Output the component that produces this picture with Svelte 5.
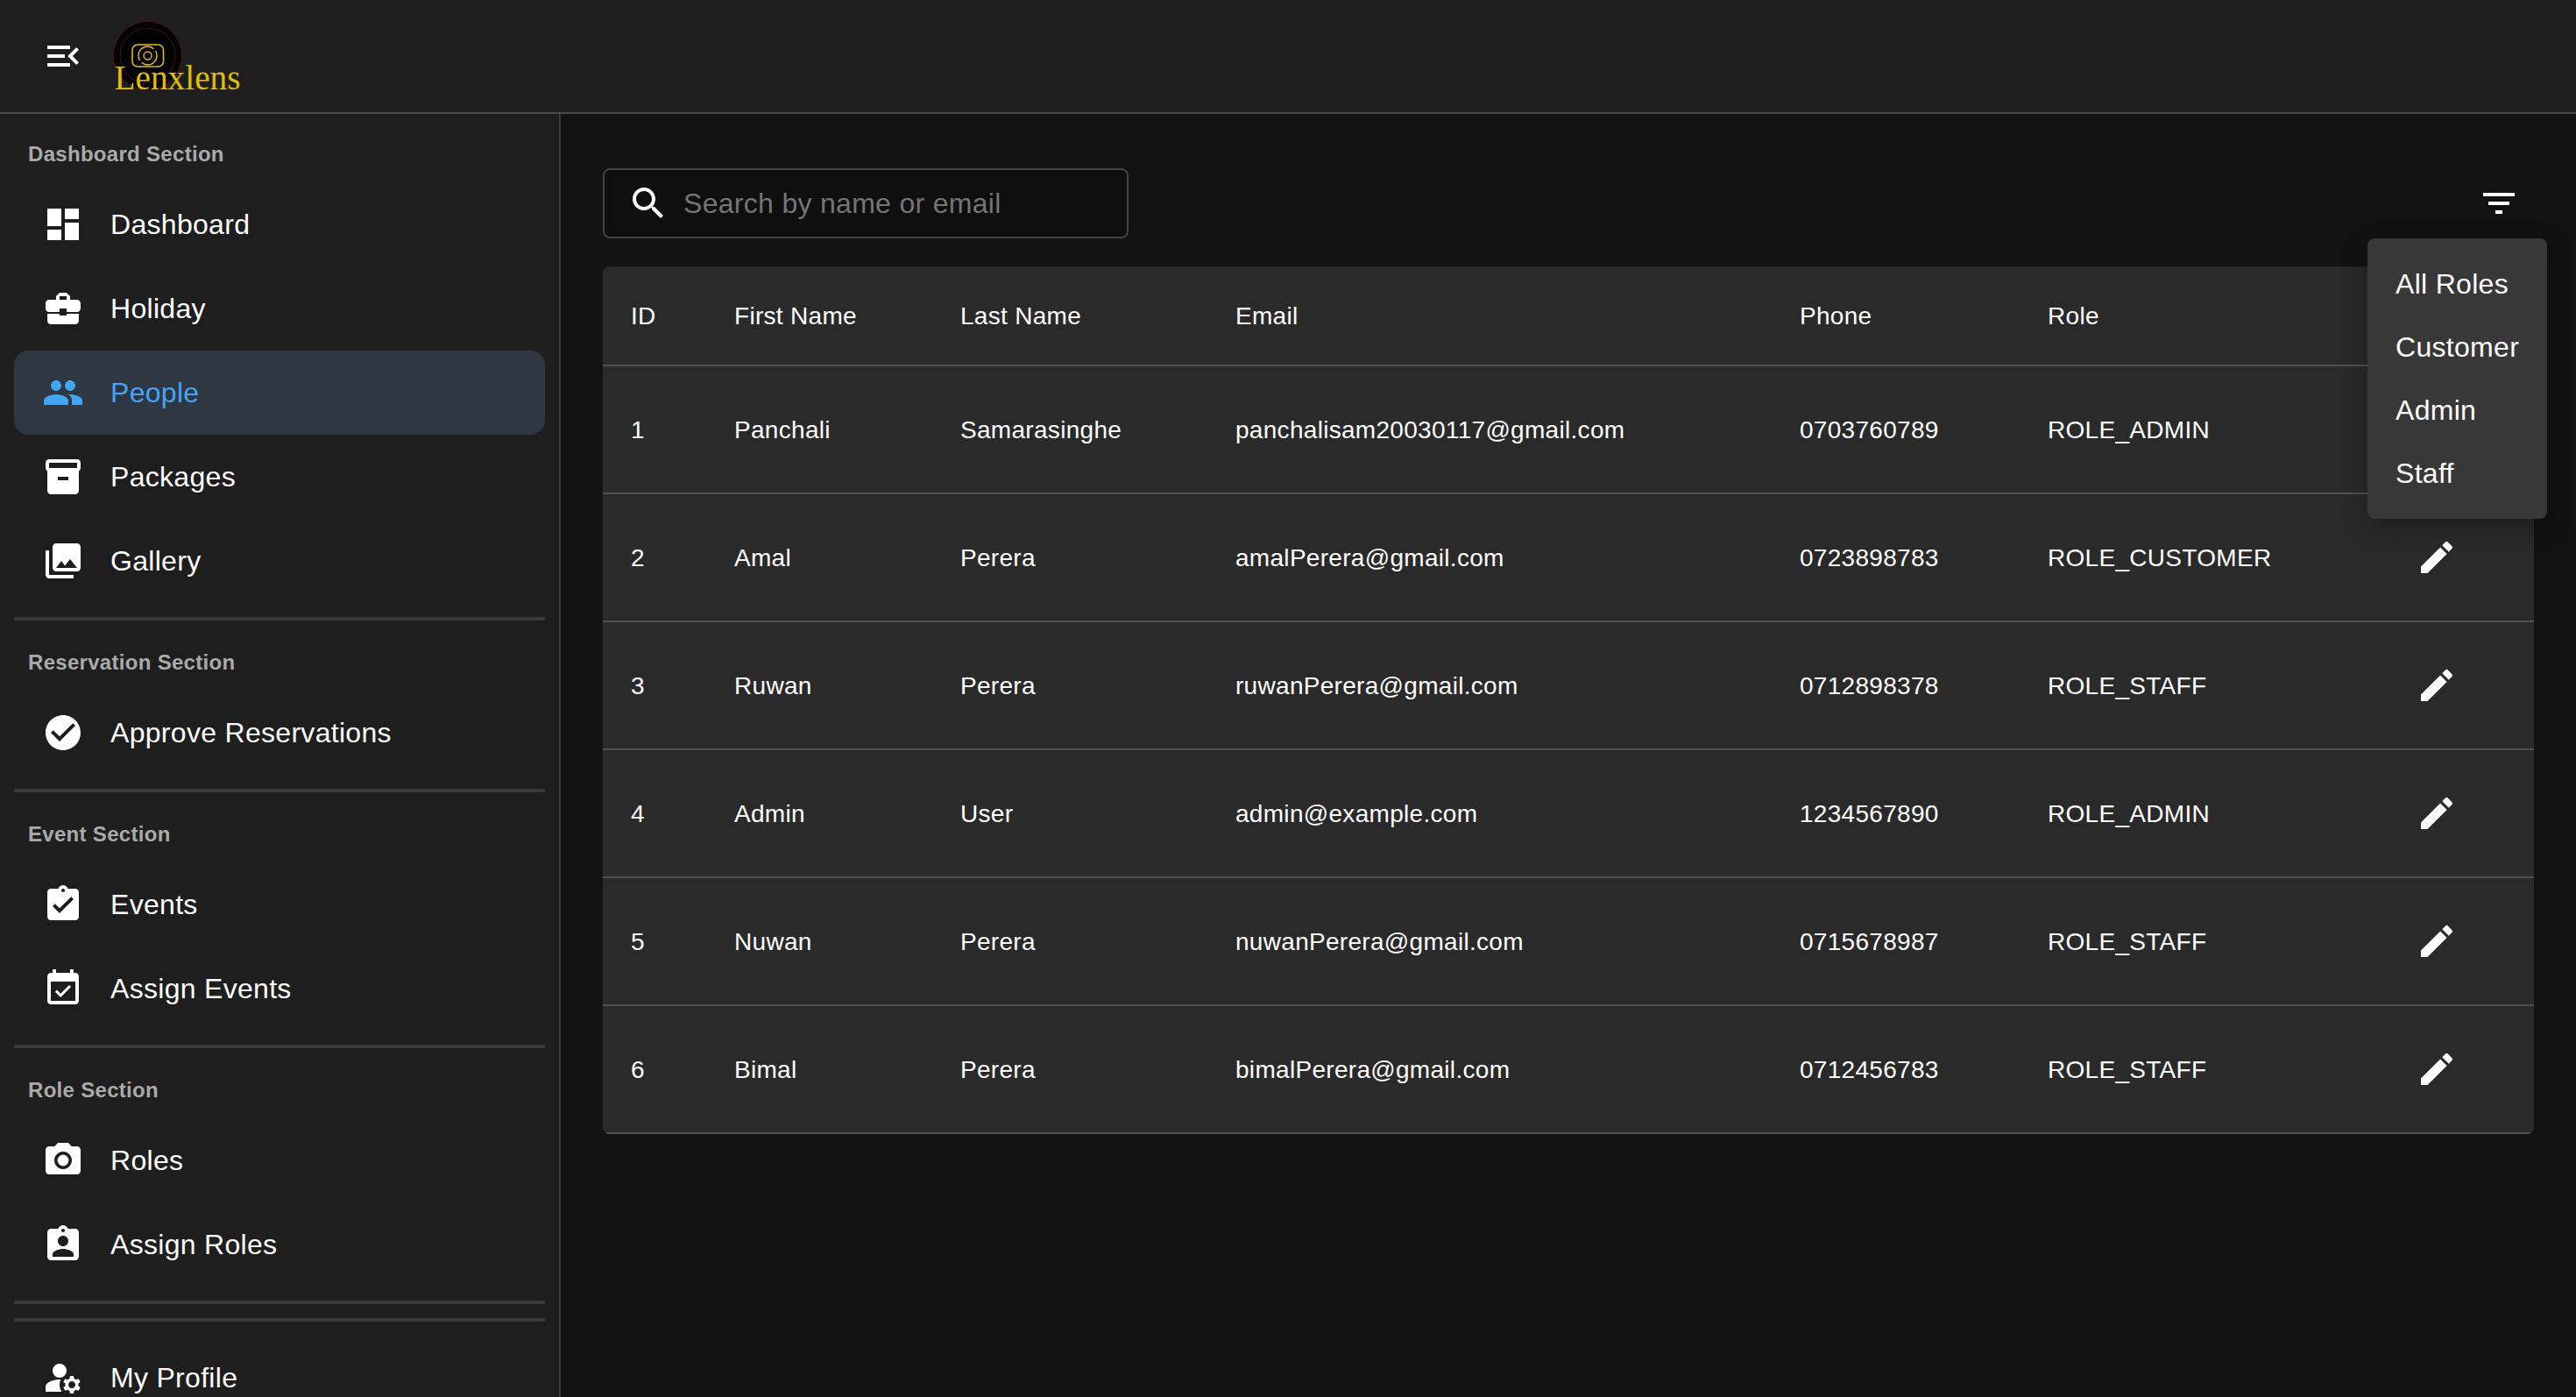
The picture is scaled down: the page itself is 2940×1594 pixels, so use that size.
<script lang="ts">
  const ICONS: Record<string, string> = {
    menuOpen: 'M3 18h13v-2H3v2zm0-5h10v-2H3v2zm0-7v2h13V6H3zm18 9.59L17.42 12 21 8.41 19.59 7l-5 5 5 5L21 15.59z',
    dashboard: 'M3 13h8V3H3v10zm0 8h8v-6H3v6zm10 0h8V11h-8v10zm0-18v6h8V3h-8z',
    holiday: 'M10 16v-1H3.01L3 19c0 1.11.89 2 2 2h14c1.11 0 2-.89 2-2v-4h-7v1h-4zm10-9h-4.01V5l-2-2h-4l-2 2v2H4c-1.1 0-2 .9-2 2v3c0 1.11.89 2 2 2h6v-2h4v2h6c1.1 0 2-.9 2-2V9c0-1.1-.9-2-2-2zm-6 0h-4V5h4v2z',
    people: 'M16 11c1.66 0 2.99-1.34 2.99-3S17.66 5 16 5c-1.66 0-3 1.34-3 3s1.34 3 3 3zm-8 0c1.66 0 2.99-1.34 2.99-3S9.66 5 8 5C6.34 5 5 6.34 5 8s1.34 3 3 3zm0 2c-2.33 0-7 1.17-7 3.5V19h14v-2.5c0-2.33-4.67-3.5-7-3.5zm8 0c-.29 0-.62.02-.97.05 1.16.84 1.97 1.97 1.97 3.45V19h6v-2.5c0-2.33-4.67-3.5-7-3.5z',
    packages: 'M20 2H4c-1 0-2 .9-2 2v3.01c0 .72.43 1.34 1 1.69V20c0 1.1 1.1 2 2 2h14c.9 0 2-.9 2-2V8.7c.57-.35 1-.97 1-1.69V4c0-1.1-1-2-2-2zm-5 12H9v-2h6v2zm5-7H4V4l16-.02V7z',
    gallery: 'M22 16V4c0-1.1-.9-2-2-2H8c-1.1 0-2 .9-2 2v12c0 1.1.9 2 2 2h12c1.1 0 2-.9 2-2zm-11-4 2.03 2.71L16 11l4 5H8l3-4zM2 6v14c0 1.1.9 2 2 2h14v-2H4V6H2z',
    approve: 'M12 2C6.48 2 2 6.48 2 12s4.48 10 10 10 10-4.48 10-10S17.52 2 12 2zm-2 15-5-5 1.41-1.41L10 14.17l7.59-7.59L19 8l-9 9z',
    events: 'M19 3h-4.18C14.4 1.84 13.3 1 12 1c-1.3 0-2.4.84-2.82 2H5c-1.1 0-2 .9-2 2v14c0 1.1.9 2 2 2h14c1.1 0 2-.9 2-2V5c0-1.1-.9-2-2-2zm-7 0c.55 0 1 .45 1 1s-.45 1-1 1-1-.45-1-1 .45-1 1-1zm-2 14-4-4 1.41-1.41L10 14.17l6.59-6.59L18 9l-8 8z',
    assignEvents: 'M16.53 11.06 15.47 10l-4.88 4.88-2.12-2.12-1.06 1.06L10.59 17l5.94-5.94zM19 3h-1V1h-2v2H8V1H6v2H5c-1.11 0-1.99.9-1.99 2L3 19c0 1.1.89 2 2 2h14c1.1 0 2-.9 2-2V5c0-1.1-.9-2-2-2zm0 16H5V8h14v11z',
    roles: 'M12 8.8a3.2 3.2 0 1 0 0 6.4 3.2 3.2 0 0 0 0-6.4zM9 2 7.17 4H4c-1.1 0-2 .9-2 2v12c0 1.1.9 2 2 2h16c1.1 0 2-.9 2-2V6c0-1.1-.9-2-2-2h-3.17L15 2H9zm3 15c-2.76 0-5-2.24-5-5s2.24-5 5-5 5 2.24 5 5-2.24 5-5 5z',
    assignRoles: 'M19 3h-4.18C14.4 1.84 13.3 1 12 1c-1.3 0-2.4.84-2.82 2H5c-1.1 0-2 .9-2 2v14c0 1.1.9 2 2 2h14c1.1 0 2-.9 2-2V5c0-1.1-.9-2-2-2zm-7 0c.55 0 1 .45 1 1s-.45 1-1 1-1-.45-1-1 .45-1 1-1zm0 4c1.66 0 3 1.34 3 3s-1.34 3-3 3-3-1.34-3-3 1.34-3 3-3zm6 12H6v-1.4c0-2 4-3.1 6-3.1s6 1.1 6 3.1V19z',
    profile: 'M10 4a4 4 0 1 0 0 8 4 4 0 0 0 0-8zM10.67 13.02C10.45 13.01 10.23 13 10 13c-2.42 0-4.68.67-6.61 1.82-.88.52-1.39 1.5-1.39 2.53V20h9.26c-.79-1.13-1.26-2.51-1.26-4 0-1.07.25-2.07.67-2.98zM20.75 16c0-.22-.03-.42-.06-.63l1.14-1.01-1-1.73-1.45.49c-.32-.27-.68-.48-1.08-.63L18 11h-2l-.3 1.49c-.4.15-.76.36-1.08.63l-1.45-.49-1 1.73 1.14 1.01c-.03.21-.06.41-.06.63s.03.42.06.63l-1.14 1.01 1 1.73 1.45-.49c.32.27.68.48 1.08.63L16 21h2l.3-1.49c.4-.15.76-.36 1.08-.63l1.45.49 1-1.73-1.14-1.01c.03-.21.06-.41.06-.63zM17 18c-1.1 0-2-.9-2-2s.9-2 2-2 2 .9 2 2-.9 2-2 2z',
    search: 'M15.5 14h-.79l-.28-.27C15.41 12.59 16 11.11 16 9.5 16 5.91 13.09 3 9.5 3S3 5.91 3 9.5 5.91 16 9.5 16c1.61 0 3.09-.59 4.23-1.57l.27.28v.79l5 4.99L20.49 19l-4.99-5zm-6 0C7.01 14 5 11.99 5 9.5S7.01 5 9.5 5 14 7.01 14 9.5 11.99 14 9.5 14z',
    filter: 'M10 18h4v-2h-4v2zM3 6v2h18V6H3zm3 7h12v-2H6v2z',
    edit: 'M3 17.25V21h3.75L17.81 9.94l-3.75-3.75L3 17.25zM20.71 7.04c.39-.39.39-1.02 0-1.41l-2.34-2.34a.9959.9959 0 0 0-1.41 0l-1.83 1.83 3.75 3.75 1.83-1.83z',
  };

  const sections = [
    {
      title: 'Dashboard Section',
      items: [
        { label: 'Dashboard', icon: 'dashboard' },
        { label: 'Holiday', icon: 'holiday' },
        { label: 'People', icon: 'people', active: true },
        { label: 'Packages', icon: 'packages' },
        { label: 'Gallery', icon: 'gallery' },
      ],
    },
    { title: 'Reservation Section', items: [{ label: 'Approve Reservations', icon: 'approve' }] },
    {
      title: 'Event Section',
      items: [
        { label: 'Events', icon: 'events' },
        { label: 'Assign Events', icon: 'assignEvents' },
      ],
    },
    {
      title: 'Role Section',
      items: [
        { label: 'Roles', icon: 'roles' },
        { label: 'Assign Roles', icon: 'assignRoles' },
      ],
    },
  ];

  const users = [
    { id: 1, first: 'Panchali', last: 'Samarasinghe', email: 'panchalisam20030117@gmail.com', phone: '0703760789', role: 'ROLE_ADMIN' },
    { id: 2, first: 'Amal', last: 'Perera', email: 'amalPerera@gmail.com', phone: '0723898783', role: 'ROLE_CUSTOMER' },
    { id: 3, first: 'Ruwan', last: 'Perera', email: 'ruwanPerera@gmail.com', phone: '0712898378', role: 'ROLE_STAFF' },
    { id: 4, first: 'Admin', last: 'User', email: 'admin@example.com', phone: '1234567890', role: 'ROLE_ADMIN' },
    { id: 5, first: 'Nuwan', last: 'Perera', email: 'nuwanPerera@gmail.com', phone: '0715678987', role: 'ROLE_STAFF' },
    { id: 6, first: 'Bimal', last: 'Perera', email: 'bimalPerera@gmail.com', phone: '0712456783', role: 'ROLE_STAFF' },
  ];

  const columns = ['ID', 'First Name', 'Last Name', 'Email', 'Phone', 'Role', ''];
  const roleOptions = ['All Roles', 'Customer', 'Admin', 'Staff'];
</script>

{#snippet icon(name: string)}
  <svg class="icon" viewBox="0 0 24 24" aria-hidden="true"><path d={ICONS[name]} /></svg>
{/snippet}

{#snippet navItem(item: { label: string; icon: string; active?: boolean })}
  <a class="nav-item" class:active={item.active} href="#{item.label}">
    {@render icon(item.icon)}
    <span>{item.label}</span>
  </a>
{/snippet}

<div class="app">
  <header class="topbar">
    {@render icon('menuOpen')}
    <svg class="logo" viewBox="125 0 155 128" aria-label="Lenxlens">
      <circle cx="168.5" cy="63.5" r="39.2" fill="#000" stroke="#5c0f2c" stroke-width="1" />
      <circle cx="168.5" cy="63.5" r="31.5" fill="none" stroke="#4a0d26" stroke-width="1" />
      <rect x="151" y="51" width="35.5" height="25" rx="6" fill="none" stroke="#e2c000" stroke-width="1.6" />
      <circle cx="168.5" cy="63.5" r="10.5" fill="none" stroke="#e2c000" stroke-width="1.4" stroke-dasharray="24 3 30 3" />
      <circle cx="168.5" cy="63.5" r="4.5" fill="none" stroke="#e2c000" stroke-width="1.4" />
      <text x="130.5" y="102" class="wordmark" textLength="144" lengthAdjust="spacingAndGlyphs">Lenxlens</text>
    </svg>
  </header>

  <div class="body">
    <aside class="sidebar">
      {#each sections as section}
        <section class="group">
          <h6>{section.title}</h6>
          {#each section.items as item}
            {@render navItem(item)}
          {/each}
        </section>
        <hr />
      {/each}
      <hr class="second" />
      {@render navItem({ label: 'My Profile', icon: 'profile' })}
    </aside>

    <main class="content">
      <div class="toolbar">
        <label class="search">
          {@render icon('search')}
          <input placeholder="Search by name or email" />
        </label>
        <button class="icon-btn" aria-label="Filter">{@render icon('filter')}</button>
      </div>

      <div class="table-wrap">
        <table>
          <colgroup>
            <col style="width: 118px" />
            <col style="width: 258px" />
            <col style="width: 314px" />
            <col style="width: 644px" />
            <col style="width: 283px" />
            <col style="width: 404px" />
            <col />
          </colgroup>
          <thead>
            <tr>
              {#each columns as col}<th>{col}</th>{/each}
            </tr>
          </thead>
          <tbody>
            {#each users as user}
              <tr>
                <td>{user.id}</td>
                <td>{user.first}</td>
                <td>{user.last}</td>
                <td>{user.email}</td>
                <td>{user.phone}</td>
                <td>{user.role}</td>
                <td class="action"><button class="icon-btn" aria-label="Edit">{@render icon('edit')}</button></td>
              </tr>
            {/each}
          </tbody>
        </table>
      </div>

      <ul class="menu">
        {#each roleOptions as option}<li>{option}</li>{/each}
      </ul>
    </main>
  </div>
</div>

<style>
  :global(body) {
    margin: 0;
    background: #121212;
    overflow: hidden;
  }

  .app {
    height: 1594px;
    display: flex;
    flex-direction: column;
    overflow: hidden;
    font-family: "Liberation Sans", Arial, sans-serif;
    color: #fff;
  }

  .icon {
    width: 48px;
    height: 48px;
    flex: none;
    display: block;
    fill: currentColor;
  }

  .topbar {
    flex: none;
    height: 128px;
    display: flex;
    align-items: center;
    padding-left: 48px;
    background: #1e1e1e;
    border-bottom: 2px solid #4b4b4b;
  }

  .logo {
    width: 155px;
    height: 128px;
    margin-left: 29px;
  }

  .wordmark {
    font-family: "Liberation Serif", serif;
    font-size: 40px;
    fill: #e0bf00;
  }

  .body {
    flex: 1;
    display: flex;
    min-height: 0;
  }

  .sidebar {
    flex: none;
    width: 640px;
    box-sizing: border-box;
    padding: 0 16px;
    background: #1e1e1e;
    border-right: 2px solid #3a3a3a;
    overflow: hidden;
  }

  .group {
    padding-top: 32px;
    padding-bottom: 16px;
  }

  .group:first-child {
    padding-top: 30px;
  }

  h6 {
    margin: 0 0 16px;
    padding-left: 16px;
    font-size: 24px;
    line-height: 32px;
    font-weight: 700;
    letter-spacing: 0.3px;
    color: #aaaaaa;
  }

  hr {
    margin: 0;
    border: 0;
    height: 4px;
    background: #3a3a3a;
  }

  hr.second {
    margin: 16px 0;
  }

  .nav-item {
    display: flex;
    align-items: center;
    height: 96px;
    padding-left: 32px;
    border-radius: 16px;
    color: #fff;
    text-decoration: none;
    font-size: 32px;
    letter-spacing: 0.3px;
  }

  .nav-item span {
    margin-left: 30px;
  }

  .nav-item.active {
    background: #2f3742;
    color: #42a5f5;
  }

  .content {
    flex: 1;
    min-width: 0;
    position: relative;
    padding: 62px 48px 0;
    background: #121212;
  }

  .toolbar {
    display: flex;
    align-items: center;
    justify-content: space-between;
    margin-bottom: 32px;
  }

  .search {
    box-sizing: border-box;
    width: 600px;
    height: 80px;
    display: flex;
    align-items: center;
    gap: 16px;
    padding-left: 26px;
    border: 2px solid #444;
    border-radius: 8px;
    background: #0f0f0f;
  }

  .search input {
    flex: 1;
    min-width: 0;
    padding: 0;
    border: 0;
    outline: 0;
    background: none;
    color: #fff;
    font: inherit;
    font-size: 32px;
    letter-spacing: 0.3px;
  }

  .search input::placeholder {
    color: #757575;
    opacity: 1;
  }

  .icon-btn {
    padding: 16px;
    border: 0;
    background: none;
    color: #fff;
  }

  .table-wrap {
    border-radius: 8px;
    overflow: hidden;
    background: #2a2a2a;
  }

  table {
    width: 100%;
    table-layout: fixed;
    border-collapse: separate;
    border-spacing: 0;
    font-size: 28px;
    letter-spacing: 0.3px;
  }

  th,
  td {
    box-sizing: border-box;
    padding: 2px 32px 0;
    text-align: left;
    font-weight: 400;
    border-bottom: 2px solid #515151;
    white-space: nowrap;
  }

  th {
    height: 114px;
  }

  td {
    height: 146px;
  }

  .action {
    padding-top: 0;
    padding-bottom: 0;
  }

  .menu {
    position: absolute;
    top: 142px;
    right: 33px;
    box-sizing: border-box;
    width: 205px;
    margin: 0;
    padding: 16px 0;
    list-style: none;
    background: #383838;
    border-radius: 8px;
    box-shadow: 0 10px 30px rgba(0, 0, 0, 0.3);
  }

  .menu li {
    height: 72px;
    line-height: 72px;
    padding-left: 32px;
    font-size: 32px;
    letter-spacing: 0.3px;
  }
</style>
